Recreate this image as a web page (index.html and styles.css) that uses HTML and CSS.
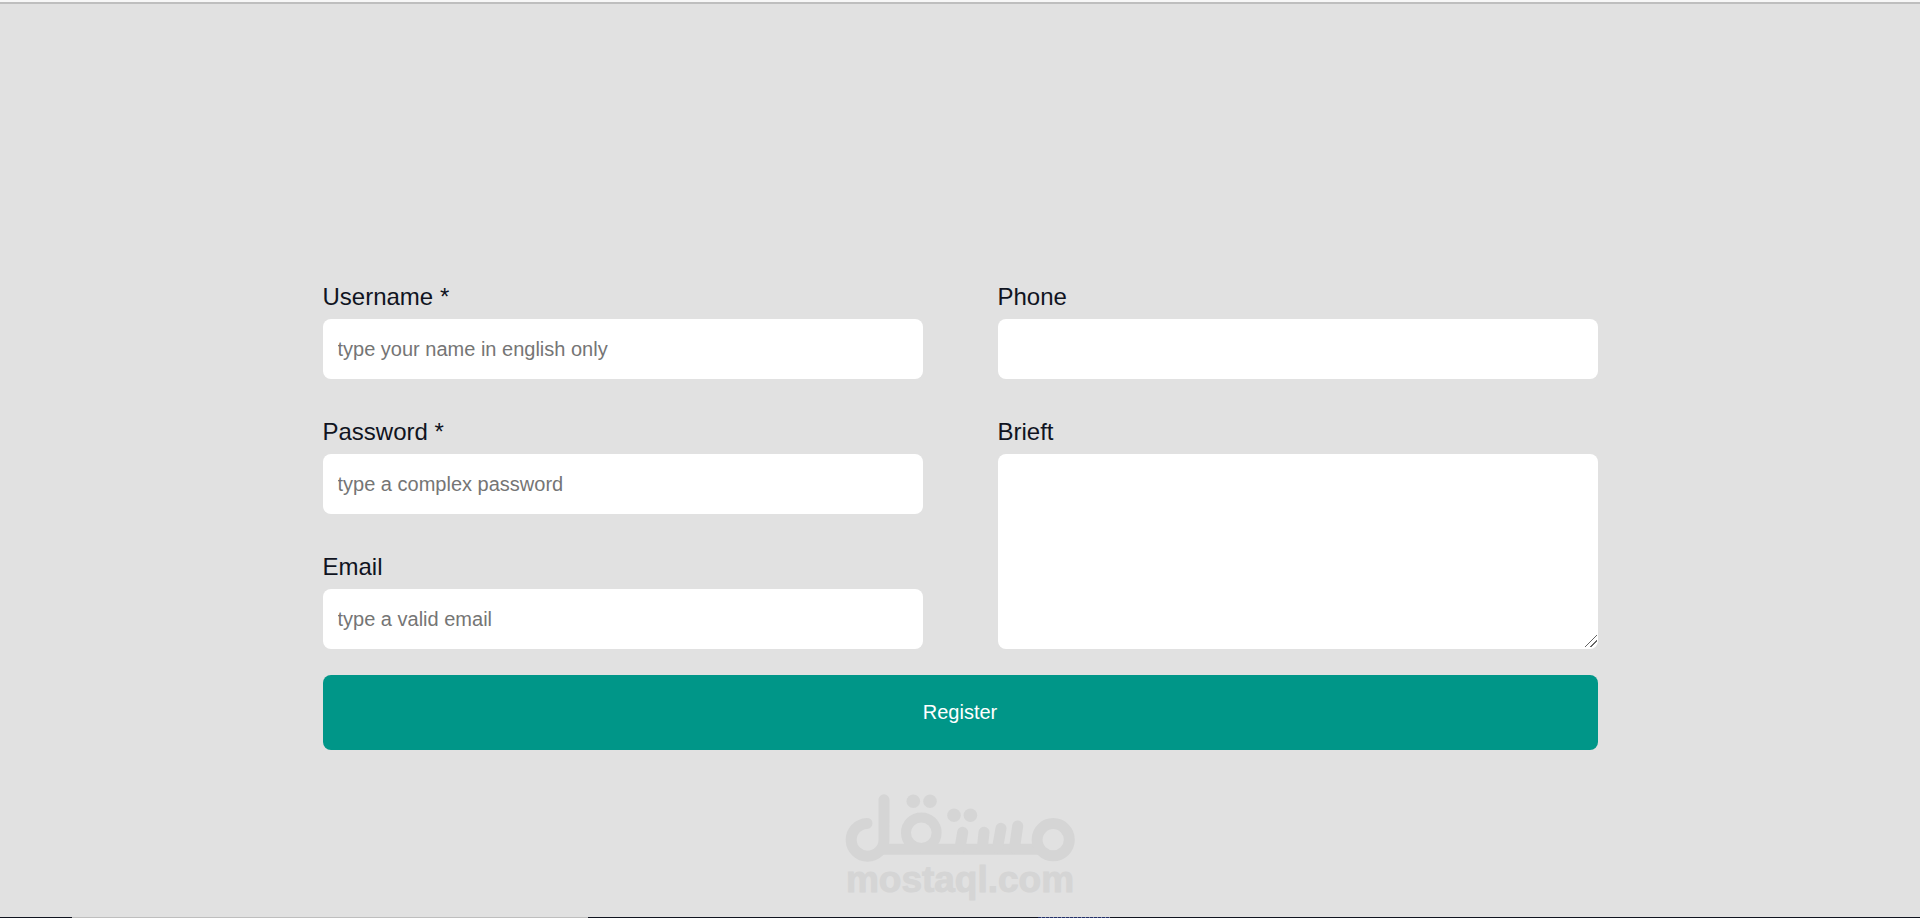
FILE: index.html
```html
<!DOCTYPE html>
<html lang="en">
<head>
    <meta charset="UTF-8">
    <meta name="viewport" content="width=device-width, initial-scale=1.0">
    <title>Register</title>
    <link rel="stylesheet" href="styles.css">
</head>
<body>
    <header></header>
    <main>
        <form action="/register" method="post">
            <div class="form-group">
                <label for="username">Username *</label>
                <input type="text" id="username" name="username" placeholder="type your name in english only" required>
            </div>
            <div class="form-group">
                <label for="phone">Phone</label>
                <input type="tel" id="phone" name="phone">
            </div>
            <div class="form-group">
                <label for="password">Password *</label>
                <input type="password" id="password" name="password" placeholder="type a complex password" required>
            </div>
            <div class="form-group brief">
                <label for="brief">Brieft</label>
                <textarea id="brief" name="brief"></textarea>
            </div>
            <div class="form-group">
                <label for="email">Email</label>
                <input type="email" id="email" name="email" placeholder="type a valid email">
            </div>
            <button type="submit" class="btn">Register</button>
        </form>
        <div class="brand">
            <svg width="230" height="68" viewBox="0 0 230 68" role="img" aria-label="مستقل">
                <g fill="none" stroke="#d5d5d5" stroke-width="11" stroke-linecap="round">
                    <path d="M22 29.4A16.4 16.4 0 1 0 39 46V5.8"/>
                    <path d="M36 55.2H194" stroke-linecap="butt"/>
                    <circle cx="76.3" cy="38.7" r="15.3" stroke-width="10"/>
                    <path d="M117.7 38.3L115 54M139 38.3L137.3 54M156 34.3L152.5 54M172.7 32L169.5 54"/>
                    <circle cx="208.2" cy="45.7" r="16.1"/>
                </g>
                <g fill="#d5d5d5">
                    <circle cx="68.3" cy="7.2" r="6.8"/>
                    <circle cx="85" cy="7.2" r="6.8"/>
                    <circle cx="109" cy="21.3" r="6.8"/>
                    <circle cx="125.4" cy="21.3" r="6.8"/>
                </g>
            </svg>
            <span>mostaql.com</span>
        </div>
    </main>
    <footer>
        <div class="start"></div>
        <div class="search"></div>
        <div class="tasks"></div>
        <div class="active"></div>
        <div class="tray"></div>
    </footer>
</body>
</html>
```
FILE: styles.css
```css
* {
    box-sizing: border-box;
}
body {
    display: flex;
    flex-direction: column;
    min-height: 100vh;
    margin: 0;
    background-color: #e1e1e1;
    color: #10141f;
    font-family: 'Liberation Sans', Arial, sans-serif;
}
header {
    height: 4px;
    background-color: #f7f7f7;
    border-bottom: 2px solid #bebebe;
}
main {
    flex: 1;
    display: flex;
    flex-direction: column;
    align-items: center;
    padding: 279px 24px 0;
}
form {
    display: grid;
    grid-template-columns: 1fr 1fr;
    column-gap: 75px;
    row-gap: 39px;
    width: 100%;
    max-width: 1275px;
}
.form-group {
    display: flex;
    flex-direction: column;
}
.form-group label {
    margin-bottom: 8px;
    font-size: 24px;
    line-height: 28px;
}
.form-group input,
.form-group textarea {
    width: 100%;
    height: 60px;
    padding: 15px;
    border: none;
    border-radius: 8px;
    background-color: #fff;
    font-family: inherit;
    font-size: 20px;
}
.form-group input::placeholder {
    color: #757575;
}
.brief {
    grid-row: span 2;
}
.form-group textarea {
    flex: 1;
    resize: vertical;
}
.form-group textarea::-webkit-resizer {
    background: linear-gradient(135deg, transparent 8px, #666 8px 9px, transparent 9px 12px, #666 12px 13px, transparent 13px) 2px 1px / 12px 12px no-repeat;
}
.btn {
    grid-column: span 2;
    height: 75px;
    margin-top: -13px;
    border: none;
    border-radius: 8px;
    background-color: #009688;
    color: #fff;
    font-family: inherit;
    font-size: 20px;
    cursor: pointer;
}
.brand {
    display: flex;
    flex-direction: column;
    align-items: center;
    margin-top: 44px;
    color: #d5d5d5;
}
.brand span {
    font-size: 37px;
    font-weight: bold;
    line-height: 36px;
    -webkit-text-stroke: 1px #d5d5d5;
}
footer {
    display: flex;
    height: 1px;
    background-color: #10141f;
}
.start {
    width: 72px;
}
.search {
    width: 516px;
    background-color: #bebebe;
}
.tasks {
    width: 450px;
}
.active {
    width: 72px;
    background: repeating-linear-gradient(90deg, #223067 0 3px, #8088a8 3px 4px);
}
.tray {
    flex: 1;
}
```
